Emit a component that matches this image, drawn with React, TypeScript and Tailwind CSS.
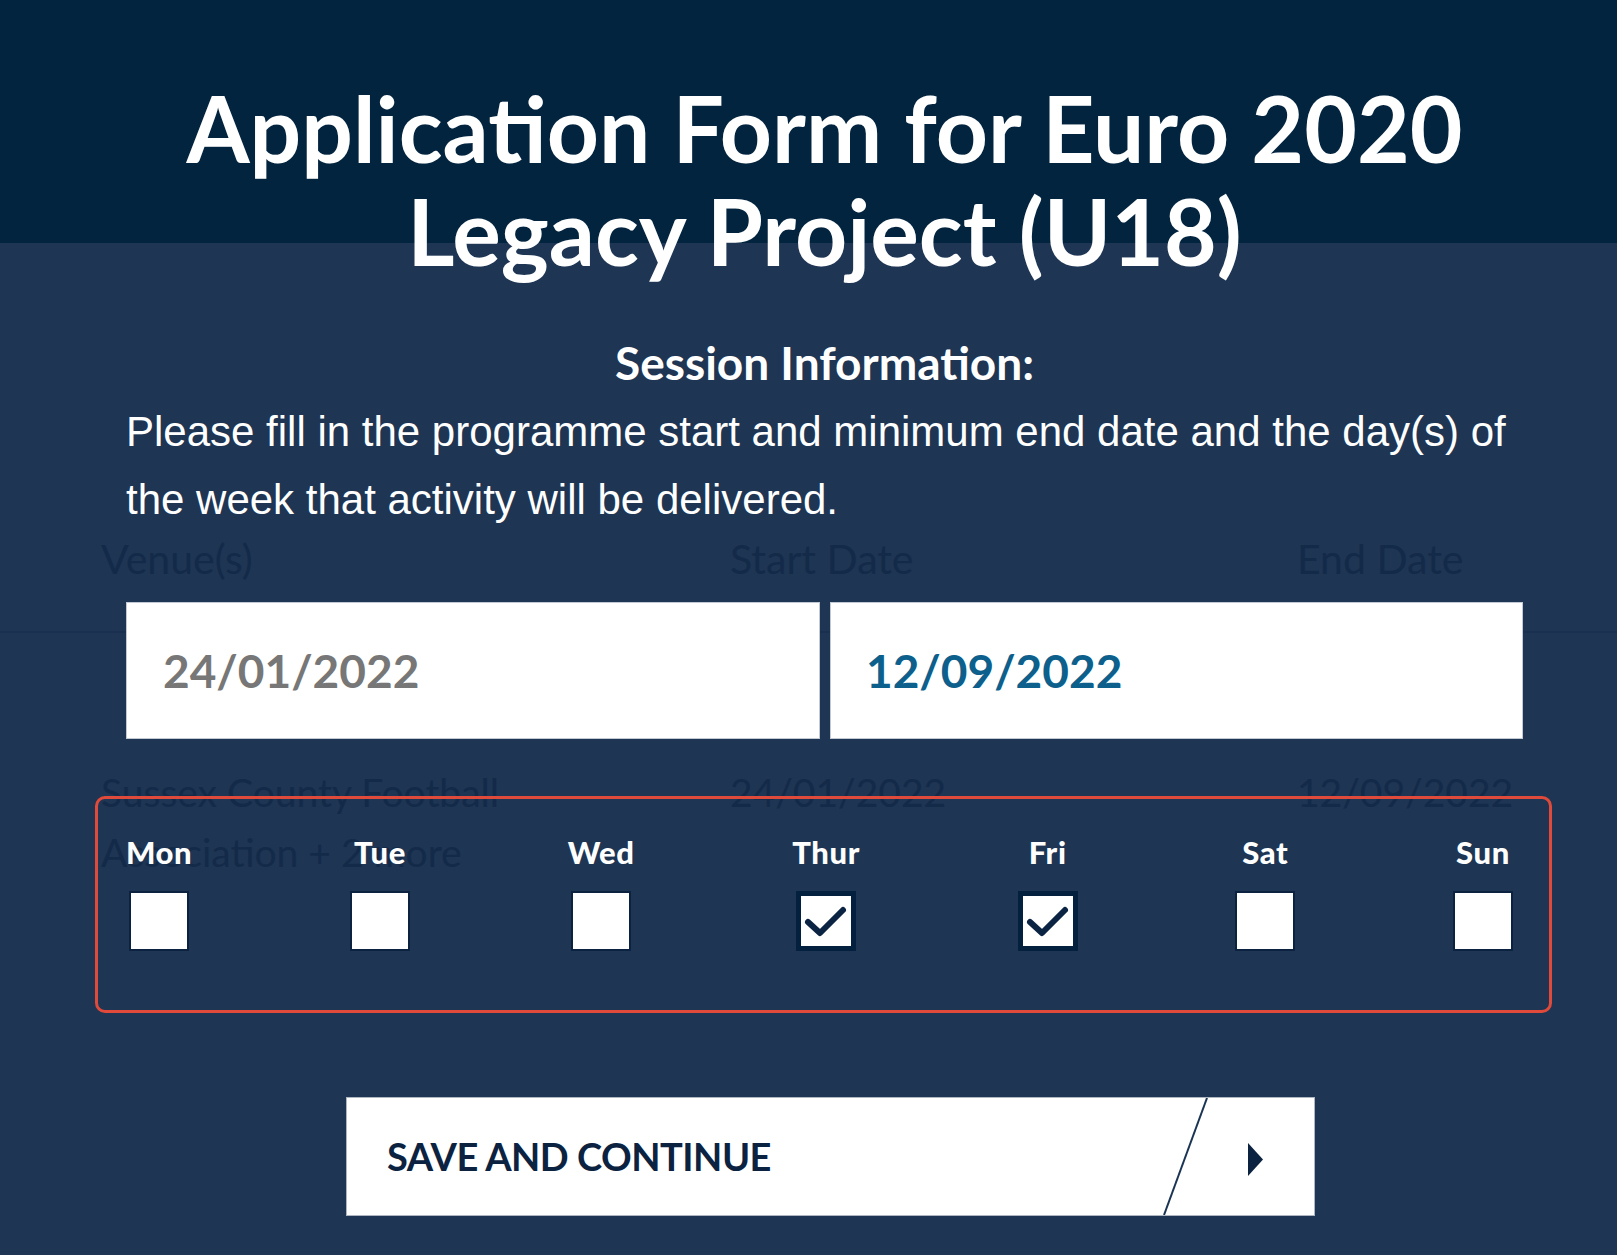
import React from "react";

const days: { label: string; checked: boolean }[] = [
  { label: "Mon", checked: false },
  { label: "Tue", checked: false },
  { label: "Wed", checked: false },
  { label: "Thur", checked: true },
  { label: "Fri", checked: true },
  { label: "Sat", checked: false },
  { label: "Sun", checked: false },
];

function CheckBox({ checked }: { checked: boolean }) {
  if (checked) {
    return (
      <div className="w-[60px] h-[60px] bg-white border-[5px] border-[#04203f] flex items-center justify-center">
        <svg width="50" height="50" viewBox="0 0 50 50">
          <polyline
            points="7,26 19,37 42,14"
            fill="none"
            stroke="#0c2444"
            strokeWidth="6"
            strokeLinejoin="round"
            strokeLinecap="round"
          />
        </svg>
      </div>
    );
  }
  return <div className="w-[60px] h-[60px] bg-white border-2 border-[#0b2340]" />;
}

export default function App() {
  return (
    <div className="relative w-full min-h-[1255px] overflow-hidden bg-[linear-gradient(to_bottom,#03243f_243px,#1e3554_243px)]">
      {/* faded page content underneath the form */}
      <div className="absolute inset-x-0 top-0 pointer-events-none font-['Lato',sans-serif] text-[#142a49]">
        <div className="mt-[534px] grid grid-cols-[629px_567px_1fr] pl-[101px] text-[41px] leading-[50px]">
          <div>Venue(s)</div>
          <div>Start Date</div>
          <div>End Date</div>
        </div>
        <div className="mt-[47px] h-[2px] bg-[#1a3050]" />
        <div className="mt-[129px] grid grid-cols-[629px_567px_1fr] pl-[101px] text-[39px] leading-[60px]">
          <div>
            Sussex County Football
            <br />
            Association + 2 more
          </div>
          <div>24/01/2022</div>
          <div>12/09/2022</div>
        </div>
      </div>

      {/* form */}
      <div className="relative ml-[126px] w-[1397px] pt-[76px] pb-[39px]">
        <h1 className="font-['Lato',sans-serif] font-bold text-white text-center text-[91px] leading-[103px]">
          Application Form for Euro 2020
          <br />
          Legacy Project (U18)
        </h1>

        <h2 className="mt-[54px] font-['Lato',sans-serif] font-bold text-white text-center text-[46px] leading-[54px]">
          Session Information:
        </h2>

        <p className="mt-[8px] font-['Liberation_Sans',Arial,sans-serif] text-white text-[42px] leading-[68px]">
          Please fill in the programme start and minimum end date and the day(s) of the week that activity will be delivered.
        </p>

        <div className="mt-[68px] flex gap-[10px]">
          <div className="w-[694px] h-[137px] bg-white border border-[#c3c9d2] flex items-center pl-[36px] font-['Lato',sans-serif] font-bold text-[46px] text-[#777777]">
            24/01/2022
          </div>
          <div className="w-[693px] h-[137px] bg-white border border-[#c3c9d2] flex items-center pl-[35px] font-['Lato',sans-serif] font-bold text-[46px] text-[#0d5f8c]">
            12/09/2022
          </div>
        </div>

        <div className="mt-[57px] -ml-[31px] -mr-[29px] border-[3px] border-[#e04a3a] rounded-[10px] pl-[28px] pr-[36px] pt-[35px] pb-[59px]">
          <div className="flex justify-between">
            {days.map((d) => (
              <div key={d.label} className="flex flex-col items-center">
                <div className="font-['Lato',sans-serif] font-black text-white text-[31px] leading-[36px] tracking-[0.6px]">
                  {d.label}
                </div>
                <div className="mt-[21px]">
                  <CheckBox checked={d.checked} />
                </div>
              </div>
            ))}
          </div>
        </div>

        <button className="mt-[84px] ml-[220px] w-[969px] h-[119px] bg-white border border-[#aeb6c2] flex items-stretch">
          <span className="flex-1 flex items-center pl-[40px] font-['Lato',sans-serif] font-bold text-[38px] text-[#0b2341] tracking-[-0.5px]">
            SAVE AND CONTINUE
          </span>
          <svg width="151" height="117" viewBox="0 0 151 117" className="shrink-0">
            <line x1="44" y1="0" x2="1" y2="117" stroke="#1b3454" strokeWidth="2" />
            <polygon points="85,45 100,61.5 85,78" fill="#0b2341" />
          </svg>
        </button>
      </div>
    </div>
  );
}
